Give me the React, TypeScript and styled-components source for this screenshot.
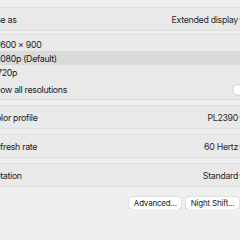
import React from 'react';
import styled, { createGlobalStyle } from 'styled-components';

const GlobalStyle = createGlobalStyle`
  html, body {
    margin: 0;
    padding: 0;
    background: #efefef;
    overflow: hidden;
  }
  body {
    font-family: Inter, "Noto Sans", "Liberation Sans", sans-serif;
    -webkit-font-smoothing: antialiased;
  }
`;

const Pane = styled.div`
  width: 278px;
  margin-left: -20px;
  padding-top: 7px;
  display: flex;
  flex-direction: column;
  gap: 5px;
  color: #222;
  font-size: 8.8px;
  letter-spacing: -0.3px;
`;

const Group = styled.section<{ $tight?: boolean }>`
  background: #e9e9e9;
  border: 1px solid #dedede;
  border-radius: 5px;
  display: flex;
  flex-direction: column;
  margin-bottom: ${(p) => (p.$tight ? '-2px' : '0')};
`;

const Row = styled.div<{ $h?: number }>`
  height: ${(p) => p.$h ?? 22}px;
  padding: 0 8px 0 9px;
  display: flex;
  align-items: center;
  justify-content: space-between;
`;

const Value = styled.div`
  display: flex;
  align-items: center;
  gap: 1px;
  margin-right: 5px;
  color: #2a2a2a;
`;

const ResList = styled.div`
  padding-top: 2px;
  display: flex;
  flex-direction: column;
`;

const ResItem = styled.div<{ $active?: boolean }>`
  height: 14px;
  padding-left: 16px;
  display: flex;
  align-items: center;
  background: ${(p) => (p.$active ? '#dadada' : 'transparent')};
`;

const Toggle = styled.div`
  width: 18px;
  height: 10px;
  border-radius: 5px;
  background: #dcdcdc;
  box-shadow: inset 0 0 0 0.5px #c8c8c8;
  position: relative;
  margin-right: -2px;
  margin-top: 1px;

  &::after {
    content: '';
    position: absolute;
    left: 0;
    top: 0;
    width: 10px;
    height: 10px;
    border-radius: 50%;
    background: #fff;
    box-shadow: 0 0 0 0.5px #bdbdbd;
  }
`;

const Footer = styled.div`
  display: flex;
  justify-content: flex-end;
  gap: 5px;
  padding: 5px 19px 0 0;
`;

const Button = styled.button`
  font: inherit;
  font-size: 8px;
  letter-spacing: -0.2px;
  color: #222;
  height: 12px;
  padding: 0 4.5px;
  background: #fff;
  border: none;
  border-radius: 3px;
  box-shadow: 0 0.5px 1px rgba(0, 0, 0, 0.2), 0 0 0 0.5px rgba(0, 0, 0, 0.08);
  display: flex;
  align-items: center;
`;

function Chevrons() {
  return (
    <svg width="5" height="8" viewBox="0 0 5 8" fill="none">
      <path d="M1 3 L2.5 1.5 L4 3 M1 5 L2.5 6.5 L4 5" stroke="#555" strokeWidth="0.9" strokeLinecap="round" strokeLinejoin="round" />
    </svg>
  );
}

function PopupRow({ label, value }: { label: string; value: string }) {
  return (
    <Row>
      <span>{label}</span>
      <Value>
        {value}
        <Chevrons />
      </Value>
    </Row>
  );
}

export default function App() {
  return (
    <>
      <GlobalStyle />
      <Pane>
        <Group $tight>
          <PopupRow label="Use as" value="Extended display" />
        </Group>

        <Group>
          <ResList>
            <ResItem>1600 × 900</ResItem>
            <ResItem $active>1080p (Default)</ResItem>
            <ResItem>720p</ResItem>
          </ResList>
          <Row $h={20}>
            <span>Show all resolutions</span>
            <Toggle />
          </Row>
        </Group>

        <Group>
          <PopupRow label="Color profile" value="PL2390" />
        </Group>

        <Group>
          <PopupRow label="Refresh rate" value="60 Hertz" />
        </Group>

        <Group>
          <PopupRow label="Rotation" value="Standard" />
        </Group>

        <Footer>
          <Button>Advanced...</Button>
          <Button>Night Shift...</Button>
        </Footer>
      </Pane>
    </>
  );
}
